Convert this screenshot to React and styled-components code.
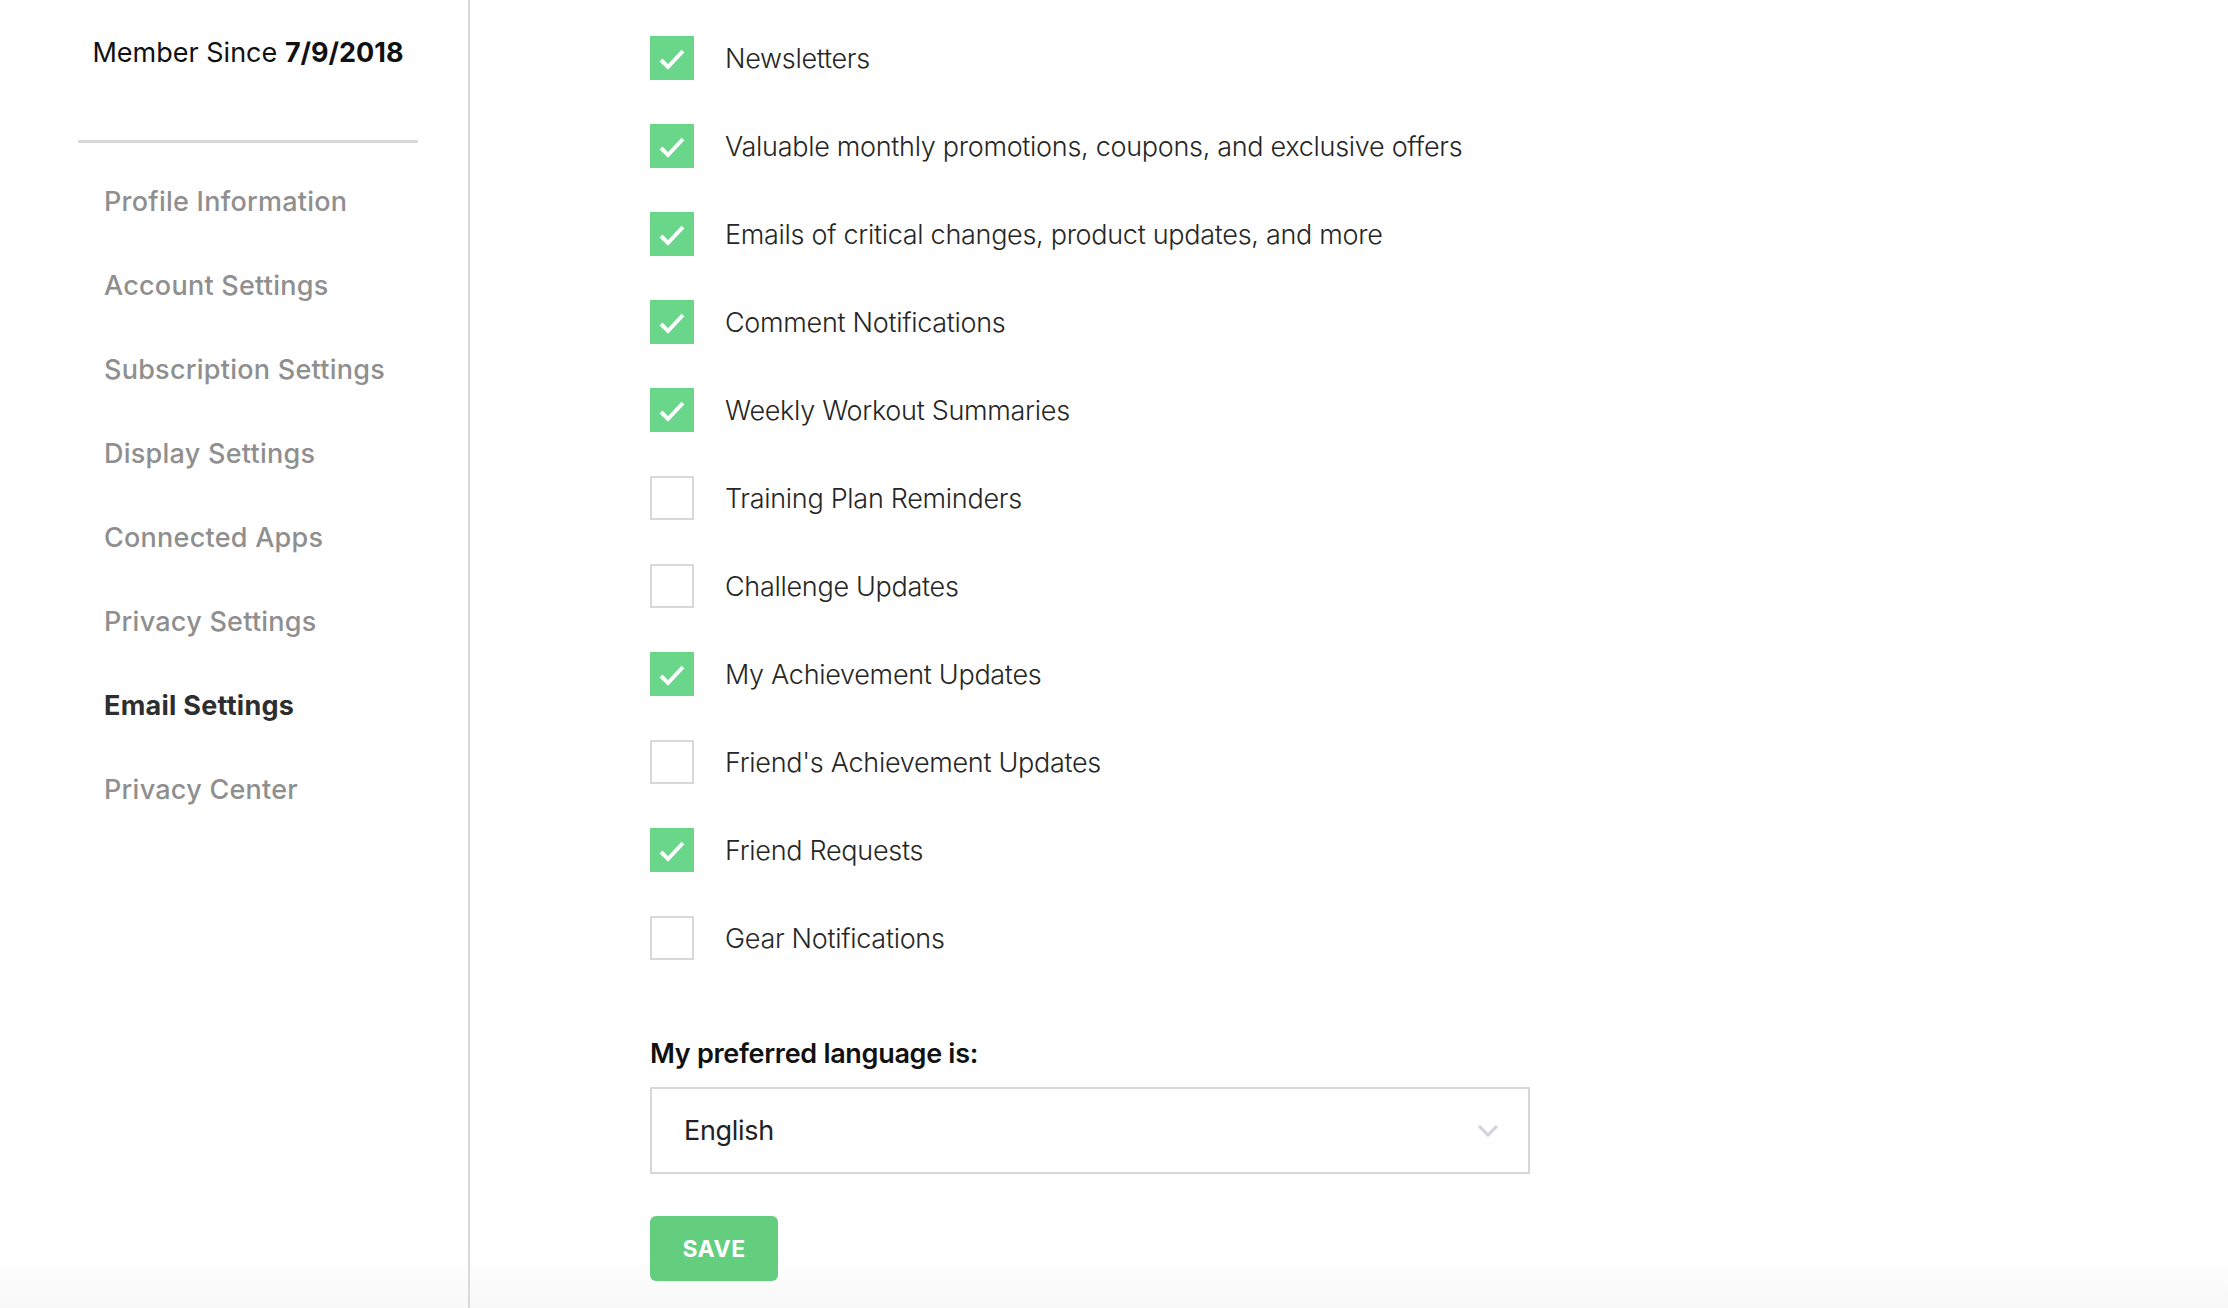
import React, { useState } from "react";
import styled, { createGlobalStyle } from "styled-components";

const GlobalStyle = createGlobalStyle`
  html, body {
    margin: 0;
    padding: 0;
    min-height: 100%;
  }
  body {
    font-family: Inter, "Noto Sans", "Liberation Sans", sans-serif;
    background: linear-gradient(to bottom, #ffffff calc(100% - 56px), #f8f8f8 100%);
    min-height: 100vh;
    color: #222;
  }
`;

const NAV = [
  "Profile Information",
  "Account Settings",
  "Subscription Settings",
  "Display Settings",
  "Connected Apps",
  "Privacy Settings",
  "Email Settings",
  "Privacy Center"
];

const OPTIONS = [
  { label: "Newsletters", on: true },
  { label: "Valuable monthly promotions, coupons, and exclusive offers", on: true },
  { label: "Emails of critical changes, product updates, and more", on: true },
  { label: "Comment Notifications", on: true },
  { label: "Weekly Workout Summaries", on: true },
  { label: "Training Plan Reminders", on: false },
  { label: "Challenge Updates", on: false },
  { label: "My Achievement Updates", on: true },
  { label: "Friend's Achievement Updates", on: false },
  { label: "Friend Requests", on: true },
  { label: "Gear Notifications", on: false }
];

const Check = () => (
  <svg width="44" height="44" viewBox="0 0 44 44">
    <polyline
      points="11,24 18,31 33,15"
      fill="none"
      stroke="#fff"
      strokeWidth="4"
    />
  </svg>
);

const Chevron = () => (
  <svg width="22" height="13" viewBox="0 0 22 13">
    <polyline
      points="2,2 11,11 20,2"
      fill="none"
      stroke="#d2d2d8"
      strokeWidth="3"
    />
  </svg>
);

export default function App() {
  const [options, setOptions] = useState(OPTIONS);

  const toggle = i =>
    setOptions(list =>
      list.map((o, j) => (j === i ? { ...o, on: !o.on } : o))
    );

  return (
    <Page>
      <GlobalStyle />
      <Sidebar>
        <Member>
          Member Since <b>7/9/2018</b>
        </Member>
        <Divider />
        <Nav>
          {NAV.map(item => (
            <NavItem key={item} $active={item === "Email Settings"}>
              {item}
            </NavItem>
          ))}
        </Nav>
      </Sidebar>

      <Main>
        <OptionList>
          {options.map((o, i) => (
            <OptionRow key={o.label} onClick={() => toggle(i)}>
              <Box $checked={o.on}>{o.on && <Check />}</Box>
              <OptionLabel>{o.label}</OptionLabel>
            </OptionRow>
          ))}
        </OptionList>

        <FieldLabel>My preferred language is:</FieldLabel>
        <Select>
          <span>English</span>
          <Chevron />
        </Select>

        <SaveButton type="button">SAVE</SaveButton>
      </Main>
    </Page>
  );
}

const Page = styled.div`
  display: flex;
  min-height: 100vh;
`;

const Sidebar = styled.aside`
  width: 470px;
  flex-shrink: 0;
  box-sizing: border-box;
  padding: 33px 50px 0 78px;
  border-right: 2px solid #d9d9d9;
`;

const Member = styled.div`
  font-size: 27px;
  line-height: 40px;
  color: #111;
  text-align: center;

  b {
    font-weight: 700;
  }
`;

const Divider = styled.div`
  height: 3px;
  background: #d8d8d8;
  margin-top: 67px;
`;

const Nav = styled.nav`
  display: flex;
  flex-direction: column;
  margin-top: 17px;
  padding-left: 26px;
`;

const NavItem = styled.a`
  display: block;
  height: 84px;
  line-height: 84px;
  font-size: 27px;
  letter-spacing: 0.25px;
  font-weight: ${p => (p.$active ? 700 : 500)};
  color: ${p => (p.$active ? "#2e2e2e" : "#8f8f8f")};
  cursor: pointer;
  white-space: nowrap;
`;

const Main = styled.main`
  flex: 1;
  display: flex;
  flex-direction: column;
  align-items: flex-start;
  padding: 36px 0 0 180px;
`;

const OptionList = styled.div`
  display: flex;
  flex-direction: column;
  gap: 44px;
`;

const OptionRow = styled.label`
  display: flex;
  align-items: center;
  gap: 31px;
  height: 44px;
  cursor: pointer;
`;

const Box = styled.span`
  width: 44px;
  height: 44px;
  box-sizing: border-box;
  flex-shrink: 0;
  display: flex;
  background: ${p => (p.$checked ? "#6ad68a" : "#fff")};
  border: ${p => (p.$checked ? "none" : "2px solid #d8d8dc")};

  svg {
    display: block;
  }
`;

const OptionLabel = styled.span`
  font-size: 27px;
  font-weight: 300;
  letter-spacing: -0.3px;
  color: #262626;
  white-space: nowrap;
`;

const FieldLabel = styled.div`
  margin-top: 74px;
  font-size: 27px;
  line-height: 40px;
  font-weight: 600;
  letter-spacing: -0.3px;
  color: #111;
`;

const Select = styled.div`
  margin-top: 13px;
  width: 880px;
  height: 87px;
  box-sizing: border-box;
  border: 2px solid #d6d6db;
  display: flex;
  align-items: center;
  justify-content: space-between;
  padding: 0 29px 0 32px;
  font-size: 27px;
  font-weight: 400;
  letter-spacing: -0.3px;
  color: #222;
  cursor: pointer;

  svg {
    display: block;
  }
`;

const SaveButton = styled.button`
  margin-top: 42px;
  width: 128px;
  height: 65px;
  border: none;
  border-radius: 6px;
  background: #63cf7e;
  color: #fff;
  font-family: inherit;
  font-size: 23px;
  font-weight: 700;
  letter-spacing: 0.5px;
  cursor: pointer;
`;
